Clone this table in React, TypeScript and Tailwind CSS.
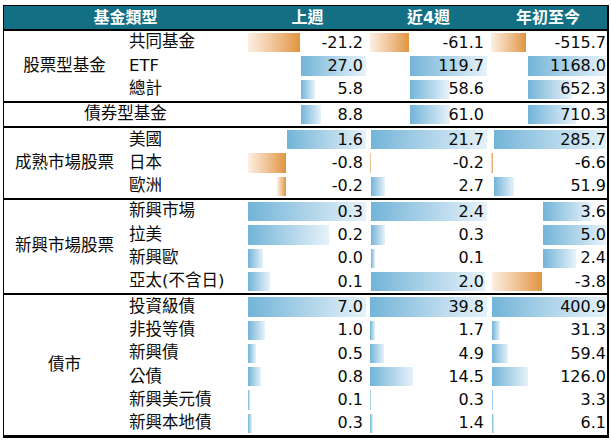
import React from 'react';

type Cell = { v: string; bar: [number, number]; neg?: boolean };

interface Row {
  name: string;
  cells: [Cell, Cell, Cell];
}

interface Group {
  label: string;
  merged?: boolean;
  rows: Row[];
}

const c = (v: string, l: number, w: number, neg = false): Cell => ({ v, bar: [l, w], neg });

const groups: Group[] = [
  {
    label: '股票型基金',
    rows: [
      { name: '共同基金', cells: [c('-21.2', 1, 52, true), c('-61.1', 2, 39, true), c('-515.7', 2, 35, true)] },
      { name: 'ETF', cells: [c('27.0', 54, 65), c('119.7', 42, 77), c('1168.0', 39, 78)] },
      { name: '總計', cells: [c('5.8', 54, 14), c('58.6', 42, 39), c('652.3', 39, 44)] },
    ],
  },
  {
    label: '債券型基金',
    merged: true,
    rows: [{ name: '', cells: [c('8.8', 54, 20), c('61.0', 42, 40), c('710.3', 39, 48)] }],
  },
  {
    label: '成熟市場股票',
    rows: [
      { name: '美國', cells: [c('1.6', 40, 79), c('21.7', 3, 116), c('285.7', 5, 112)] },
      { name: '日本', cells: [c('-0.8', 1, 38, true), c('-0.2', 2, 1, true), c('-6.6', 2, 2, true)] },
      { name: '歐洲', cells: [c('-0.2', 30, 9, true), c('2.7', 3, 14), c('51.9', 5, 20)] },
    ],
  },
  {
    label: '新興市場股票',
    rows: [
      { name: '新興市場', cells: [c('0.3', 1, 118), c('2.4', 3, 116), c('3.6', 54, 48)] },
      { name: '拉美', cells: [c('0.2', 1, 81), c('0.3', 3, 14), c('5.0', 54, 63)] },
      { name: '新興歐', cells: [c('0.0', 1, 15), c('0.1', 3, 4), c('2.4', 54, 33)] },
      { name: '亞太(不含日)', cells: [c('0.1', 1, 22), c('2.0', 3, 114), c('-3.8', 3, 50, true)] },
    ],
  },
  {
    label: '債市',
    rows: [
      { name: '投資級債', cells: [c('7.0', 1, 118), c('39.8', 2, 117), c('400.9', 3, 114)] },
      { name: '非投等債', cells: [c('1.0', 1, 17), c('1.7', 2, 5), c('31.3', 3, 8)] },
      { name: '新興債', cells: [c('0.5', 1, 8), c('4.9', 2, 14), c('59.4', 3, 16)] },
      { name: '公債', cells: [c('0.8', 1, 13), c('14.5', 2, 43), c('126.0', 3, 36)] },
      { name: '新興美元債', cells: [c('0.1', 1, 2), c('0.3', 2, 1), c('3.3', 3, 1)] },
      { name: '新興本地債', cells: [c('0.3', 1, 4), c('1.4', 2, 3), c('6.1', 3, 2)] },
    ],
  },
];

const widths = ['w-[121px] pr-[5px]', 'w-[121px] pr-[5px]', 'w-[118px] pr-[1px]'];

function BarCell({ cell, idx }: { cell: Cell; idx: number }) {
  return (
    <div className={`relative h-full flex items-center justify-end ${widths[idx]}`}>
      <div
        className={`absolute top-[2px] bottom-[2px] ${
          cell.neg
            ? 'bg-linear-to-r from-[#fcefe3] to-[#e0953c]'
            : 'bg-linear-to-r from-[#72b4d8] to-[#e6f2f9]'
        }`}
        style={{ left: cell.bar[0], width: cell.bar[1] }}
      />
      <span className="relative">{cell.v}</span>
    </div>
  );
}

export default function App() {
  return (
    <div className="w-[611px] h-[440px] bg-white pt-[5px] pl-[3px] font-['DejaVu_Sans','Noto_Sans_CJK_TC',sans-serif] text-[16px] text-[#0a0a0a] leading-none">
      <div className="w-[606px] border-l border-r-2 border-t border-b-[3px] border-black">
        {/* header */}
        <div className="flex h-[23px] bg-[#136f84] text-white font-bold border-b-2 border-black box-content">
          <div className="w-[243px] flex items-center justify-center">基金類型</div>
          <div className="w-[121px] flex items-center justify-center">上週</div>
          <div className="w-[121px] flex items-center justify-center">近4週</div>
          <div className="w-[118px] flex items-center justify-center">年初至今</div>
        </div>

        {groups.map((g, gi) => (
          <div key={g.label} className={`flex ${gi > 0 ? 'border-t-2 border-black' : ''}`}>
            {g.merged ? (
              <div className="flex h-[23.3px]">
                <div className="w-[243px] flex items-center justify-center text-[16.5px]">{g.label}</div>
                {g.rows[0].cells.map((cell, i) => (
                  <BarCell key={i} cell={cell} idx={i} />
                ))}
              </div>
            ) : (
              <>
                <div className="w-[121px] flex items-center justify-center text-[16.5px]">{g.label}</div>
                <div className="flex flex-col">
                  {g.rows.map((r) => (
                    <div key={r.name} className="flex h-[23.3px]">
                      <div className="w-[122px] pl-[4px] flex items-center text-[16.5px]">{r.name}</div>
                      {r.cells.map((cell, i) => (
                        <BarCell key={i} cell={cell} idx={i} />
                      ))}
                    </div>
                  ))}
                </div>
              </>
            )}
          </div>
        ))}
      </div>
    </div>
  );
}
